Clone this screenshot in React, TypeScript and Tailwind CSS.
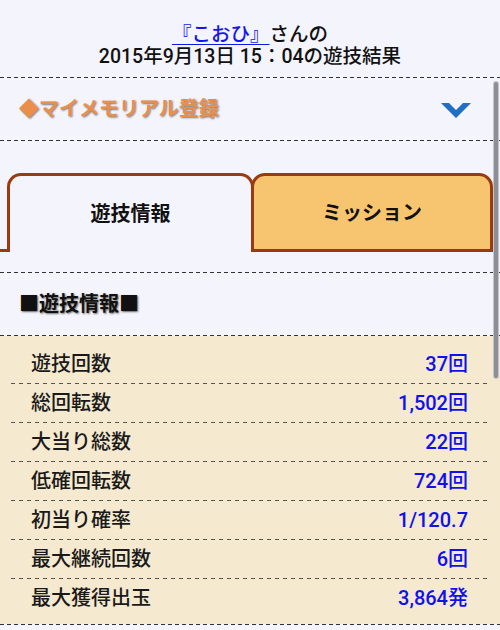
import React from "react";

const font = { fontFamily: 'Roboto, "Noto Sans CJK JP", sans-serif' };

function Dash() {
  return (
    <div className="h-px w-full bg-[repeating-linear-gradient(to_right,#333_0px,#333_4px,transparent_4px,transparent_7px)]" />
  );
}

function RowDash() {
  return (
    <div className="h-px w-full bg-[repeating-linear-gradient(to_right,#555_0px,#555_4px,transparent_4px,transparent_8px)]" />
  );
}

const rows: [string, string][] = [
  ["遊技回数", "37回"],
  ["総回転数", "1,502回"],
  ["大当り総数", "22回"],
  ["低確回転数", "724回"],
  ["初当り確率", "1/120.7"],
  ["最大継続回数", "6回"],
  ["最大獲得出玉", "3,864発"],
];

export default function App() {
  return (
    <div className="relative min-h-[630px] w-full overflow-hidden bg-[#f4f4fd] text-[#111]" style={font}>
      {/* header */}
      <div className="pt-[24px] pb-[9px] text-center text-[19.5px] font-medium leading-[22px]">
        <div>
          <a className="text-[#1515ee] underline decoration-1 underline-offset-[3px]">『こおひ』</a>
          さんの
        </div>
        <div>2015年9月13日 15：04の遊技結果</div>
      </div>
      <Dash />
      <div className="flex h-[62px] items-center justify-between pl-[19px] pr-[29px]">
        <span className="text-[20px] font-bold text-[#ea8f4b] [text-shadow:1px_1px_2px_#777]">
          ◆マイメモリアル登録
        </span>
        <svg width="30" height="15" viewBox="0 0 30 15" className="mt-[2px]">
          <polygon points="0,0 8,0 15,7 22,0 30,0 15,15" fill="#1f6fc5" />
        </svg>
      </div>
      <Dash />
      {/* tabs */}
      <div className="flex items-end pt-[32px]">
        <div className="h-[3px] w-[7px] bg-[#9b3a0f]" />
        <div className="flex h-[79px] w-[247px] items-center justify-center rounded-t-[14px] border-[3px] border-b-0 border-[#9b3a0f] bg-[#f4f4fd] text-[20px] font-bold">
          遊技情報
        </div>
        <div className="-ml-[3px] flex h-[79px] w-[242px] items-center justify-center rounded-t-[14px] border-[3px] border-[#9b3a0f] bg-[#f7c56f] text-[20px] font-bold">
          ミッション
        </div>
      </div>
      <div className="h-[20px]" />
      <Dash />
      <div className="flex h-[62px] items-center pl-[19px] text-[20px] font-bold [text-shadow:1px_1px_2px_#666]">
        ■遊技情報■
      </div>
      <Dash />
      {/* data */}
      <div className="bg-[#f5e9cf] pt-[9px] pb-[7px]">
        <div className="mx-[11px]">
          {rows.map(([label, value], i) => (
            <div key={label}>
              <div className="flex h-[38px] items-center justify-between pl-[20px] pr-[21px] text-[20px] font-medium">
                <span className="text-[#1a1a1a]">{label}</span>
                <span className="text-[#1010f0]">{value}</span>
              </div>
              {i < rows.length - 1 && <RowDash />}
            </div>
          ))}
        </div>
      </div>
      <Dash />
      {/* overlay scrollbar */}
      <div className="absolute left-[493px] top-[81px] h-[298px] w-[6px] rounded-full border border-[#c4c4cc] bg-[#8e8e96]" />
    </div>
  );
}
